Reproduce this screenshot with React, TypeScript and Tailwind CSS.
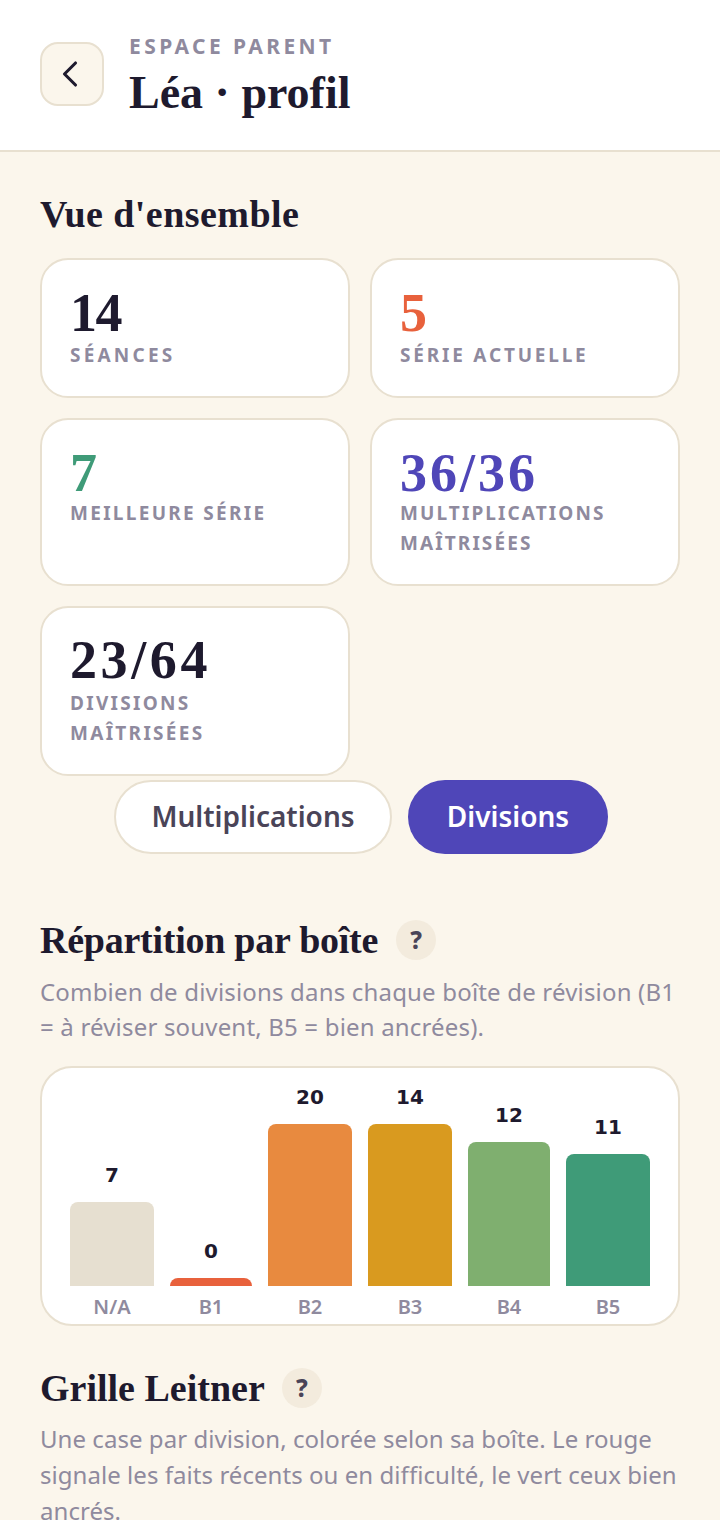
import React from 'react';
import { ChevronLeft } from 'lucide-react';

const stats = [
  { value: '14', label: 'SÉANCES', color: 'text-[#1e1a2e]', track: 'tracking-[-1.5px]', labelTrack: 'tracking-[3.2px]', top: 'pt-[24px]', gap: 'mt-[-2px]' },
  { value: '5', label: 'SÉRIE ACTUELLE', color: 'text-[#e8613c]', track: '', labelTrack: 'tracking-[2.8px]', top: 'pt-[24px]', gap: 'mt-[-2px]' },
  { value: '7', label: 'MEILLEURE SÉRIE', color: 'text-[#3f9b78]', track: '', labelTrack: 'tracking-[2.3px]', top: 'pt-[24px]', gap: 'mt-[-4px]' },
  { value: '36/36', label: 'MULTIPLICATIONS MAÎTRISÉES', color: 'text-[#4f46b8]', track: 'tracking-[3px]', labelTrack: 'tracking-[2.1px]', top: 'pt-[24px]', gap: 'mt-[-4px]' },
  { value: '23/64', label: 'DIVISIONS MAÎTRISÉES', color: 'text-[#1e1a2e]', track: 'tracking-[3.6px]', labelTrack: 'tracking-[2.3px]', top: 'pt-[23px]', gap: 'mt-[-1px]' },
];

const bars = [
  { label: 'N/A', value: 7, width: 'w-[84px]', height: 'h-[84px]', color: 'bg-[#e6dfd0]' },
  { label: 'B1', value: 0, width: 'w-[82px]', height: 'h-[8px]', color: 'bg-[#e8613c]' },
  { label: 'B2', value: 20, width: 'w-[84px]', height: 'h-[162px]', color: 'bg-[#e88a3f]' },
  { label: 'B3', value: 14, width: 'w-[84px]', height: 'h-[162px]', color: 'bg-[#d99a1f]' },
  { label: 'B4', value: 12, width: 'w-[82px]', height: 'h-[144px]', color: 'bg-[#7faf6f]' },
  { label: 'B5', value: 11, width: 'w-[84px]', height: 'h-[132px]', color: 'bg-[#3f9b78]' },
];

const serif = "font-['Liberation_Serif',serif] font-bold";

function HelpBadge() {
  return (
    <span className="w-10 h-10 rounded-full bg-[#f3ebdd] flex items-center justify-center text-[24px] font-extrabold text-[#4a4458]">
      ?
    </span>
  );
}

export default function App() {
  return (
    <div className="h-[1520px] overflow-hidden bg-[#fbf6ec] font-['Noto_Sans',sans-serif] text-[#1e1a2e]">
      {/* Header */}
      <header className="h-[152px] bg-white border-b-2 border-[#e8e0d0] px-10 flex items-start gap-6">
        <button className="mt-[42px] w-16 h-16 rounded-[18px] bg-[#fbf6ec] border-2 border-[#e8e0d0] flex items-center justify-center">
          <ChevronLeft size={44} strokeWidth={1.7} className="text-[#1e1a2e] -ml-1" />
        </button>
        <div className="pt-[31px]">
          <div className="text-[21px] leading-[30px] font-bold tracking-[3.4px] ml-[1px] text-[#8f8a9e]">ESPACE PARENT</div>
          <h1 className={`${serif} text-[46px] leading-[56px] mt-[4px] ml-[1px]`}>Léa · profil</h1>
        </div>
      </header>

      <main className="px-10 pt-[38px]">
        {/* Overview */}
        <h2 className={`${serif} text-[38px] leading-[48px] tracking-[0.45px]`}>Vue d'ensemble</h2>
        <div className="grid grid-cols-2 grid-rows-[140px_168px_170px] gap-5 mt-[20px]">
          {stats.map((s) => (
            <div key={s.label} className={`bg-white border-2 border-[#e8e0d0] rounded-[28px] px-7 ${s.top}`}>
              <div className={`${serif} ${s.color} ${s.track} text-[54px] leading-[58px]`}>{s.value}</div>
              <div className={`text-[19px] leading-[30px] font-bold text-[#8f8a9e] ${s.labelTrack} ${s.gap}`}>{s.label}</div>
            </div>
          ))}
        </div>

        {/* Tabs */}
        <div className="flex justify-center gap-4 mt-[4px] pl-[2px]">
          <button className="h-[74px] w-[278px] pb-[3px] rounded-full bg-white border-2 border-[#e8e0d0] text-[28px] font-semibold text-[#4a4458]">
            Multiplications
          </button>
          <button className="h-[74px] w-[200px] pb-[3px] rounded-full bg-[#4f46b8] text-[28px] font-semibold text-white">
            Divisions
          </button>
        </div>

        {/* Distribution */}
        <div className="flex items-center gap-[18px] mt-[62px]">
          <h2 className={`${serif} text-[38px] leading-[48px] tracking-[-0.25px]`}>Répartition par boîte</h2>
          <HelpBadge />
        </div>
        <p className="text-[24px] leading-[35px] text-[#8f8a9e] tracking-[0.18px] mt-[10px]">
          Combien de divisions dans chaque boîte de révision (B1 = à réviser souvent, B5 = bien ancrées).
        </p>
        <div className="mt-[22px] h-[260px] bg-white border-2 border-[#e8e0d0] rounded-[32px] px-7 pb-[2px] flex gap-4 items-end">
          {bars.map((b) => (
            <div key={b.label} className={`flex flex-col items-center ${b.width}`}>
              <div className="text-[20px] leading-[30px] font-['DejaVu_Sans',sans-serif] font-bold mb-[12px]">{b.value}</div>
              <div className={`w-full rounded-t-[8px] ${b.height} ${b.color}`} />
              <div className="text-[20px] leading-[30px] font-semibold text-[#8f8a9e] mt-[6px]">{b.label}</div>
            </div>
          ))}
        </div>

        {/* Leitner */}
        <div className="flex items-center gap-[17px] mt-[38px]">
          <h2 className={`${serif} text-[38px] leading-[48px]`}>Grille Leitner</h2>
          <HelpBadge />
        </div>
        <p className="text-[24px] leading-[36px] text-[#8f8a9e] tracking-[0.05px] mt-[9px]">
          Une case par division, colorée selon sa boîte. Le rouge signale les faits récents ou en difficulté, le vert ceux bien ancrés.
        </p>
      </main>
    </div>
  );
}
